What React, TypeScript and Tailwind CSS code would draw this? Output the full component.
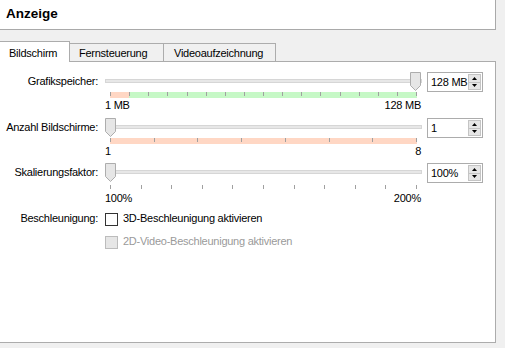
import React from "react";

function Thumb({ side }: { side: "left" | "right" }) {
  return (
    <svg
      width="11"
      height="19"
      viewBox="0 0 11 19"
      className={side === "left" ? "absolute top-0 left-0" : "absolute top-0 right-px"}
    >
      <path
        d="M0.5 0.5 H10.5 V13.5 L5.5 18.5 L0.5 13.5 Z"
        fill="#e6e6e6"
        stroke="#adadad"
        strokeWidth="1"
      />
    </svg>
  );
}

function Track({ side }: { side: "left" | "right" }) {
  return (
    <div className="relative w-[317px] h-[19px]">
      <div className="absolute left-0 right-0 top-[7px] h-[4px] bg-[#e7e7e7] border border-[#d6d6d6]" />
      <Thumb side={side} />
    </div>
  );
}

function SpinBox({ value }: { value: string }) {
  return (
    <div className="w-[56px] h-[20px] border border-[#acacac] bg-white flex items-center justify-between pl-[3px] pr-px">
      <span className="leading-[18px] whitespace-nowrap">{value}</span>
      <div className="w-[13px] h-[16px] shrink-0 flex flex-col border border-[#c4c4c4] bg-[#e6e6e6]">
        <div className="flex-1 flex items-center justify-center border-b border-[#c4c4c4]">
          <svg width="5" height="3" viewBox="0 0 5 3">
            <path d="M2.5 0 L5 3 H0 Z" fill="#000" />
          </svg>
        </div>
        <div className="flex-1 flex items-center justify-center">
          <svg width="5" height="3" viewBox="0 0 5 3">
            <path d="M0 0 H5 L2.5 3 Z" fill="#000" />
          </svg>
        </div>
      </div>
    </div>
  );
}

function Ticks({ count }: { count: number }) {
  const items = Array.from({ length: count }, (_, i) => Math.round((i * 306) / (count - 1)));
  return (
    <>
      {items.map((x, i) => (
        <span
          key={i}
          className="absolute top-0 w-px h-[4px] bg-[#a0a0a0]"
          style={{ left: x }}
        />
      ))}
    </>
  );
}

function Label({ children }: { children: React.ReactNode }) {
  return (
    <div className="w-[99px] shrink-0 text-right leading-[19px] whitespace-nowrap">{children}</div>
  );
}

function SliderGroup({
  label,
  side,
  value,
  bar,
  ticks,
  min,
  max,
  gapTop,
  barGap,
  labelsGap,
}: {
  label: string;
  side: "left" | "right";
  value: string;
  bar: "memory" | "screens" | "none";
  ticks: number;
  min: string;
  max: string;
  gapTop: string;
  barGap: string;
  labelsGap: string;
}) {
  return (
    <div className={gapTop}>
      <div className="flex h-[19px] items-start">
        <Label>{label}</Label>
        <div className="ml-[7px]">
          <Track side={side} />
        </div>
        <div className="ml-[5px]">
          <SpinBox value={value} />
        </div>
      </div>
      <div className={"ml-[106px] w-[317px] " + barGap}>
        {bar === "memory" && (
          <div className="relative ml-[5px] w-[307px] h-[6px] flex">
            <div className="w-[19px] h-full bg-[#ffd7c4]" />
            <div className="flex-1 h-full bg-[#c6f8c6]" />
            <Ticks count={ticks} />
          </div>
        )}
        {bar === "screens" && (
          <div className="relative ml-[5px] w-[307px] h-[6px] bg-[#ffd7c4]">
            <Ticks count={ticks} />
          </div>
        )}
        {bar === "none" && (
          <div className="relative ml-[5px] w-[307px] h-[4px]">
            <Ticks count={ticks} />
          </div>
        )}
        <div className={"flex justify-between pr-px leading-[15px] " + labelsGap}>
          <span>{min}</span>
          <span>{max}</span>
        </div>
      </div>
    </div>
  );
}

export default function App() {
  return (
    <div className="w-[505px] h-[348px] bg-[#f0f0f0] overflow-hidden text-[11px] tracking-[-0.25px] text-black font-['Liberation_Sans','Arial',sans-serif]">
      <div className="w-[496px] h-[30px] bg-white border-r border-b border-[#a9a9a9] flex items-center pl-[6px] pb-px">
        <span className="text-[13.5px] font-bold tracking-normal">Anzeige</span>
      </div>

      <div className="ml-[-1px] w-[497px] mt-[11px]">
        <div className="flex items-end h-[20px] relative z-10">
          <div className="w-[71px] h-[21px] -mb-px bg-white border-l border-t border-r border-[#acacac] pl-[9px] pt-[4px] leading-[15px]">
            Bildschirm
          </div>
          <div className="w-[94px] h-[18px] bg-[#f0f0f0] border-t border-r border-[#acacac] pl-[9px] pt-[2px] leading-[15px]">
            Fernsteuerung
          </div>
          <div className="w-[112px] h-[18px] bg-[#f0f0f0] border-t border-r border-[#acacac] pl-[10px] pt-[2px] leading-[15px]">
            Videoaufzeichnung
          </div>
        </div>
        <div className="h-[282px] bg-white border border-[#acacac] pt-[10px]">
          <div className="-ml-px">
            <SliderGroup
              label="Grafikspeicher:"
              side="right"
              value="128 MB"
              bar="memory"
              ticks={17}
              min="1 MB"
              max="128 MB"
              gapTop=""
              barGap="mt-px"
              labelsGap=""
            />
            <SliderGroup
              label="Anzahl Bildschirme:"
              side="left"
              value="1"
              bar="screens"
              ticks={8}
              min="1"
              max="8"
              gapTop="mt-[5px]"
              barGap="mt-px"
              labelsGap=""
            />
            <SliderGroup
              label="Skalierungsfaktor:"
              side="left"
              value="100%"
              bar="none"
              ticks={11}
              min="100%"
              max="200%"
              gapTop="mt-[4px]"
              barGap="mt-[3px]"
              labelsGap="mt-[2px]"
            />
            <div className="flex mt-[5px] h-[15px] leading-[15px]">
              <div className="w-[99px] shrink-0 text-right">Beschleunigung:</div>
              <div className="ml-[7px] flex items-start">
                <div className="mt-[2px] w-[13px] h-[13px] border border-[#333333] bg-white" />
                <span className="ml-[5px]">3D-Beschleunigung aktivieren</span>
              </div>
            </div>
            <div className="flex mt-[8px] h-[15px] leading-[15px]">
              <div className="w-[99px] shrink-0" />
              <div className="ml-[7px] flex items-start">
                <div className="mt-[2px] w-[13px] h-[13px] border border-[#bcbcbc] bg-[#e6e6e6]" />
                <span className="ml-[5px] text-[#9a9a9a]">2D-Video-Beschleunigung aktivieren</span>
              </div>
            </div>
          </div>
        </div>
      </div>
    </div>
  );
}
